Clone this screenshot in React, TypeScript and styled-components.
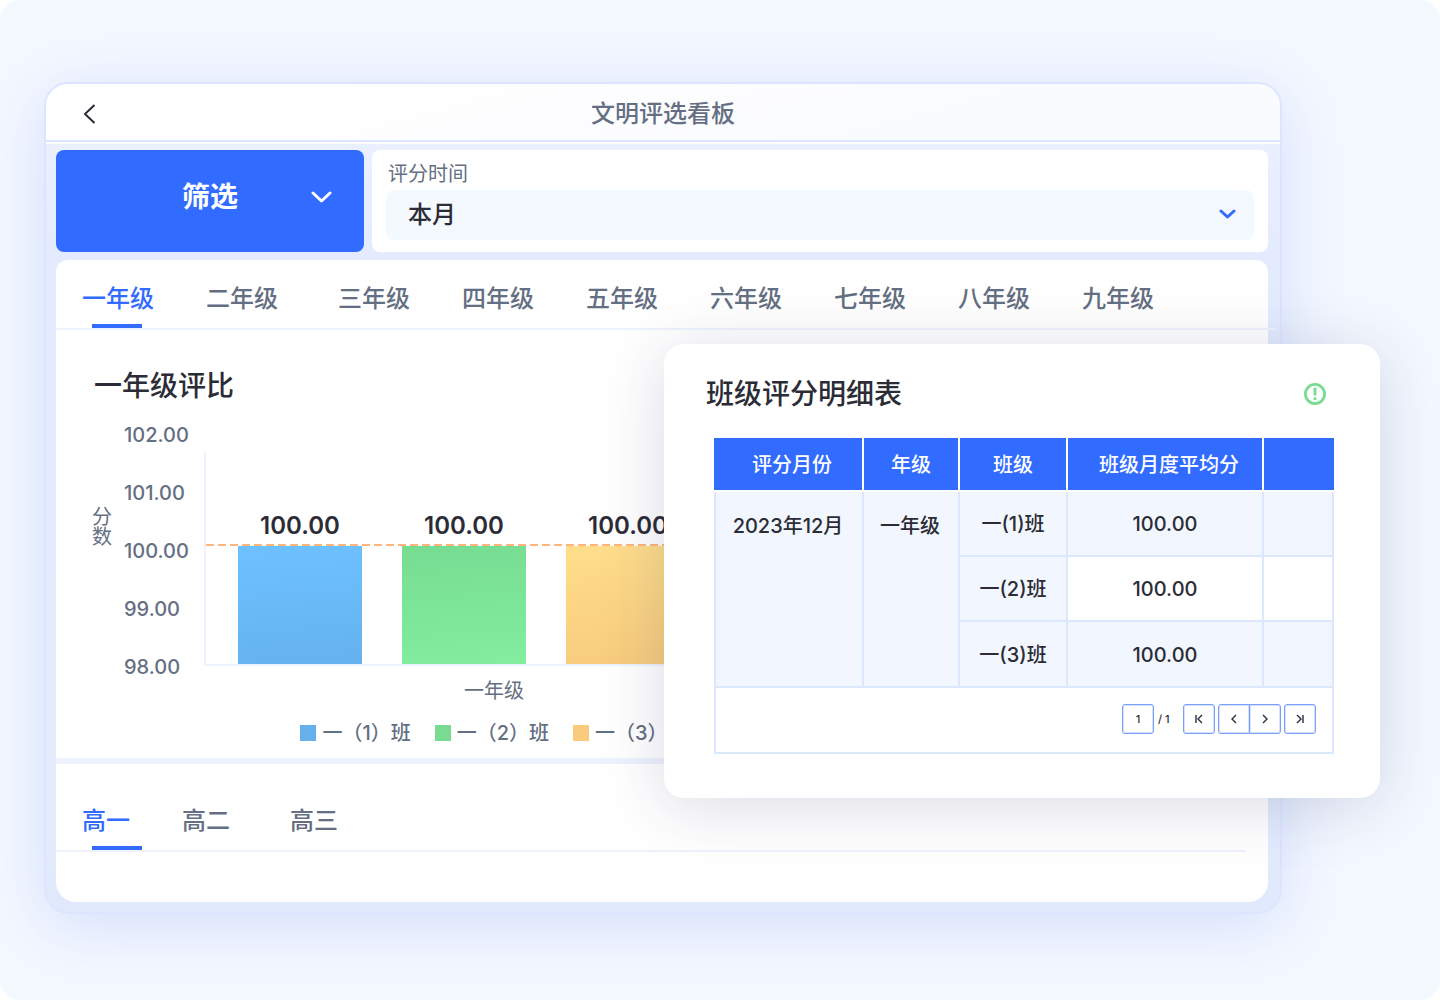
import React, { useState } from "react";
import styled, { createGlobalStyle, css } from "styled-components";

const colors = {
  primary: "#316bff",
  ink: "#2b2c36",
  muted: "#656f83",
  line: "#eef2fd",
  tableLine: "#dbe7fb",
  cell: "#f2f7ff",
};

const GlobalStyle = createGlobalStyle`
  * { box-sizing: border-box; }
  body {
    margin: 0;
    background: #fff;
    color: ${colors.ink};
    font-family: Inter, "Noto Sans CJK SC", sans-serif;
    font-weight: 500;
  }
  button, input, select { font: inherit; color: inherit; }
  button { border: 0; padding: 0; background: none; cursor: pointer; }
  h1, h2 { margin: 0; font-weight: 500; }
`;

const Page = styled.div`
  position: relative;
  min-height: 100vh;
  padding: 82px 158px 86px 44px;
  border-radius: 20px;
  background: #f4f8ff;
  overflow: hidden;
`;

const Device = styled.main`
  display: flex;
  flex-direction: column;
  border: 2px solid #dbe5ff;
  border-radius: 24px;
  background: linear-gradient(180deg, #ebf0ff 60px, #e4ebfe 170px, #e4ebfd 90%, #dfe9fb);
  box-shadow: 0 12px 64px rgba(62, 98, 232, 0.17);
  overflow: hidden;
`;

const TopBar = styled.header`
  display: grid;
  grid-template-columns: 48px 1fr 48px;
  align-items: center;
  height: 60px;
  padding: 2px 20px 0;
  border-bottom: 2px solid #fdfdff;
  background: linear-gradient(165deg, #fff 20%, #fafbff 70%);
  box-shadow: inset 0 -2px 0 #dbe5ff;
`;

const BackButton = styled.button`
  display: flex;
  justify-content: center;
`;

const PageTitle = styled.h1`
  color: ${colors.muted};
  font-size: 24px;
  line-height: 32px;
  text-align: center;
`;

const Content = styled.div`
  display: flex;
  flex-direction: column;
  gap: 8px;
  padding: 6px 12px 10px 10px;
`;

const FilterRow = styled.div`
  display: flex;
  gap: 8px;
`;

const FilterButton = styled.button`
  display: grid;
  grid-template-columns: 1fr auto 1fr;
  align-items: center;
  width: 308px;
  height: 102px;
  padding: 0 32px 8px;
  border-radius: 8px;
  background: ${colors.primary};
  color: #fff;
  font-size: 28px;
  line-height: 40px;
  font-weight: 600;
  svg { justify-self: end; }
`;

const FilterCard = styled.div`
  flex: 1;
  padding: 8px 14px 12px;
  border-radius: 8px;
  background: #fff;
`;

const FilterLabel = styled.label`
  display: block;
  padding: 0 2px;
  color: ${colors.muted};
  font-size: 20px;
  line-height: 32px;
  font-weight: 400;
`;

const SelectBox = styled.div`
  display: grid;
  align-items: center;
  border-radius: 8px;
  background: #f4f8ff;
  & > * { grid-area: 1 / 1; }
  svg { justify-self: end; margin: 0 18px 2px; pointer-events: none; }
`;

const Select = styled.select`
  width: 100%;
  height: 50px;
  padding: 0 22px 2px;
  border: 0;
  background: transparent;
  appearance: none;
  font-size: 24px;
`;

const Card = styled.section`
  border-radius: 12px 12px 20px 20px;
  background: #fff;
`;

const Tabs = styled.div<{ $columns: string; $tall?: boolean; $end: number }>`
  display: grid;
  grid-template-columns: ${(p) => p.$columns};
  height: ${(p) => (p.$tall ? 88 : 70)}px;
  align-items: end;
  padding-left: 26px;
  margin-right: ${(p) => p.$end}px;
  border-bottom: 2px solid ${colors.line};
`;

const Tab = styled.button<{ $active: boolean }>`
  display: flex;
  flex-direction: column;
  gap: 9px;
  color: ${(p) => (p.$active ? colors.primary : colors.muted)};
  font-size: 24px;
  line-height: 32px;
  text-align: left;
  white-space: nowrap;
  &::after {
    content: "";
    width: 50px;
    height: 4px;
    margin-left: 10px;
    background: ${(p) => (p.$active ? colors.primary : "transparent")};
  }
`;

const ChartSection = styled.div`
  padding: 36px 38px 10px;
  border-bottom: 6px solid ${colors.line};
`;

const SectionTitle = styled.h2`
  font-size: 28px;
  line-height: 40px;
`;

const Chart = styled.div`
  display: grid;
  grid-template-columns: 30px 80px 580px;
  margin-top: 14px;
`;

const AxisName = styled.div`
  width: 20px;
  margin: 87px 0 0 -2px;
  color: ${colors.muted};
  font-size: 20px;
  line-height: 20px;
  font-weight: 400;
`;

const Ticks = styled.ol`
  margin: 0;
  padding: 0;
  list-style: none;
  color: ${colors.muted};
  font-size: 20px;
  line-height: 30px;
  li { height: 58px; }
  li:last-child { height: 30px; }
`;

const ChartBody = styled.div`
  padding-top: 32px;
`;

const Plot = styled.div`
  position: relative;
  display: flex;
  align-items: end;
  gap: 40px;
  height: 214px;
  padding-left: 32px;
  border: solid ${colors.line};
  border-width: 0 0 2px 2px;
`;

const Average = styled.div`
  position: absolute;
  left: 0;
  right: 0;
  bottom: 118px;
  height: 2px;
  background: repeating-linear-gradient(90deg, #ffb47e 0 8px, transparent 8px 12px);
`;

const BarColumn = styled.div`
  width: 124px;
  font-size: 24px;
  line-height: 40px;
  font-weight: 600;
  text-align: center;
`;

const Bar = styled.div<{ $from: string; $to: string }>`
  background: linear-gradient(175deg, ${(p) => p.$from}, ${(p) => p.$to});
`;

const ChartCaption = styled.div`
  padding-top: 10px;
  color: ${colors.muted};
  font-size: 20px;
  line-height: 30px;
  font-weight: 400;
  text-align: center;
`;

const Legend = styled.ul`
  display: flex;
  justify-content: center;
  gap: 24px;
  margin: 12px 0 0;
  padding: 0;
  list-style: none;
  color: ${colors.muted};
  font-size: 20px;
  line-height: 30px;
`;

const LegendItem = styled.li<{ $color: string }>`
  display: flex;
  align-items: center;
  gap: 6px;
  white-space: nowrap;
  &::before {
    content: "";
    width: 16px;
    height: 16px;
    background: ${(p) => p.$color};
  }
`;

const Empty = styled.div`
  height: 50px;
`;

const Panel = styled.aside`
  position: absolute;
  top: 344px;
  right: 60px;
  width: 716px;
  padding: 30px 46px 44px 50px;
  border-radius: 20px;
  background: #fff;
  box-shadow: 0 8px 64px rgba(37, 43, 92, 0.17);
`;

const PanelHead = styled.div`
  display: flex;
  align-items: center;
  justify-content: space-between;
  margin: 0 8px 24px -8px;
`;

const Table = styled.table`
  width: 100%;
  table-layout: fixed;
  border-spacing: 0;
  border-collapse: separate;
  font-size: 20px;
  line-height: 30px;
`;

const HeadCell = styled.th<{ $indent?: boolean }>`
  height: 54px;
  padding: 2px 0 0 ${(p) => (p.$indent ? 8 : 0)}px;
  border-right: 2px solid #fff;
  border-bottom: 2px solid #fff;
  background: ${colors.primary};
  background-clip: padding-box;
  color: #fff;
  font-weight: 500;
  &:last-child { border-right: 0; }
`;

const Cell = styled.td<{ $white?: boolean; $top?: boolean }>`
  height: 65px;
  padding: ${(p) => (p.$top ? "19px 2px 0 0" : "0")};
  border-right: 2px solid ${colors.tableLine};
  border-bottom: 2px solid ${colors.tableLine};
  background: ${(p) => (p.$white ? "#fff" : colors.cell)};
  text-align: center;
  vertical-align: ${(p) => (p.$top ? "top" : "middle")};
  tr:last-child > & { height: 66px; padding-top: 2px; }
  ${(p) => p.$top && css`&:first-child { border-left: 2px solid ${colors.tableLine}; }`}
`;

const Pager = styled.nav`
  display: flex;
  align-items: center;
  justify-content: flex-end;
  height: 66px;
  padding: 0 16px 2px;
  border: solid ${colors.tableLine};
  border-width: 0 2px 2px;
  color: #272e40;
  font-size: 11px;
`;

const pagerBox = css`
  height: 30px;
  border: 1px solid #78a0fb;
  box-shadow: inset 0 0 0 1px #d5e1fe;
  background: #fff;
`;

const PageInput = styled.input`
  ${pagerBox}
  width: 32px;
  padding: 0;
  border-radius: 3px;
  text-align: center;
`;

const PageCount = styled.span`
  width: 29px;
  padding-left: 4px;
`;

const PagerGroup = styled.div`
  display: flex;
  margin: 0 3px;
`;

const PagerButton = styled.button<{ $join?: "left" | "right" }>`
  ${pagerBox}
  display: grid;
  place-items: center;
  width: 32px;
  border-radius: ${(p) =>
    p.$join === "left" ? "3px 0 0 3px" : p.$join === "right" ? "0 3px 3px 0" : "3px"};
  margin-left: ${(p) => (p.$join === "right" ? -1 : 0)}px;
`;

type StrokeProps = { d: string; w: number; h: number; color: string; stroke: number; round?: boolean };

const Stroke = ({ d, w, h, color, stroke, round }: StrokeProps) => (
  <svg width={w} height={h} viewBox={`0 0 ${w} ${h}`} fill="none" aria-hidden="true">
    <path
      d={d}
      stroke={color}
      strokeWidth={stroke}
      strokeLinecap={round ? "round" : "butt"}
      strokeLinejoin={round ? "round" : "miter"}
    />
  </svg>
);

const grades = ["一年级", "二年级", "三年级", "四年级", "五年级", "六年级", "七年级", "八年级", "九年级"];
const seniorGrades = ["高一", "高二", "高三"];
const ticks = ["102.00", "101.00", "100.00", "99.00", "98.00"];
const series = [
  { name: "一（1）班", value: "100.00", height: 118, from: "#6ec1ff", to: "#64b2ef", key: "#64b1ed" },
  { name: "一（2）班", value: "100.00", height: 118, from: "#77dc92", to: "#82ee9e", key: "#78db91" },
  { name: "一（3）班", value: "100.00", height: 118, from: "#ffde8b", to: "#f7cb7d", key: "#f9cb7e" },
];
const rows = [
  { name: "一(1)班", score: "100.00" },
  { name: "一(2)班", score: "100.00" },
  { name: "一(3)班", score: "100.00" },
];

export default function App() {
  const [grade, setGrade] = useState(0);
  const [senior, setSenior] = useState(0);

  return (
    <>
      <GlobalStyle />
      <Page>
        <Device>
          <TopBar>
            <BackButton aria-label="返回">
              <Stroke d="M11.5 1 2 10l9.500 9" w={14} h={20} color="#2b2c36" stroke={2} />
            </BackButton>
            <PageTitle>文明评选看板</PageTitle>
          </TopBar>
          <Content>
            <FilterRow>
              <FilterButton>
                <span />
                <span>筛选</span>
                <Stroke d="m2 2 8.500 8L19 2" w={21} h={12} color="#fff" stroke={3} round />
              </FilterButton>
              <FilterCard>
                <FilterLabel htmlFor="period">评分时间</FilterLabel>
                <SelectBox>
                  <Select id="period" defaultValue="month">
                    <option value="month">本月</option>
                  </Select>
                  <Stroke d="m2 2 6.500 6L15 2" w={17} h={11} color={colors.primary} stroke={3} round />
                </SelectBox>
              </FilterCard>
            </FilterRow>
            <Card>
              <Tabs role="tablist" $columns="124px 132px repeat(7, 124px)" $end={-8}>
                {grades.map((name, i) => (
                  <Tab key={name} role="tab" aria-selected={i === grade} $active={i === grade} onClick={() => setGrade(i)}>
                    {name}
                  </Tab>
                ))}
              </Tabs>
              <ChartSection>
                <SectionTitle>一年级评比</SectionTitle>
                <Chart>
                  <AxisName>分数</AxisName>
                  <Ticks>
                    {ticks.map((t) => (
                      <li key={t}>{t}</li>
                    ))}
                  </Ticks>
                  <ChartBody>
                    <Plot>
                      {series.map((s) => (
                        <BarColumn key={s.name}>
                          {s.value}
                          <Bar $from={s.from} $to={s.to} style={{ height: s.height }} />
                        </BarColumn>
                      ))}
                      <Average />
                    </Plot>
                    <ChartCaption>一年级</ChartCaption>
                    <Legend>
                      {series.map((s) => (
                        <LegendItem key={s.name} $color={s.key}>
                          {s.name}
                        </LegendItem>
                      ))}
                    </Legend>
                  </ChartBody>
                </Chart>
              </ChartSection>
              <Tabs role="tablist" $columns="100px 108px 108px" $tall $end={22}>
                {seniorGrades.map((name, i) => (
                  <Tab key={name} role="tab" aria-selected={i === senior} $active={i === senior} onClick={() => setSenior(i)}>
                    {name}
                  </Tab>
                ))}
              </Tabs>
              <Empty />
            </Card>
          </Content>
        </Device>

        <Panel>
          <PanelHead>
            <SectionTitle>班级评分明细表</SectionTitle>
            <svg width="22" height="22" viewBox="0 0 22 22" fill="none" aria-hidden="true">
              <circle cx="11" cy="11" r="9.600" stroke="#78db91" strokeWidth="2.800" />
              <path d="M11 4.800v7.700M11 14.200v2.800" stroke="#78db91" strokeWidth="2.800" />
            </svg>
          </PanelHead>
          <Table>
            <colgroup>
              <col width="150" />
              <col width="96" />
              <col width="108" />
              <col width="196" />
              <col width="70" />
            </colgroup>
            <thead>
              <tr>
                <HeadCell $indent>评分月份</HeadCell>
                <HeadCell>年级</HeadCell>
                <HeadCell>班级</HeadCell>
                <HeadCell $indent>班级月度平均分</HeadCell>
                <HeadCell />
              </tr>
            </thead>
            <tbody>
              {rows.map((r, i) => (
                <tr key={r.name}>
                  {i === 0 && (
                    <>
                      <Cell rowSpan={3} $top>2023年12月</Cell>
                      <Cell rowSpan={3} $top>一年级</Cell>
                    </>
                  )}
                  <Cell>{r.name}</Cell>
                  <Cell $white={i === 1}>{r.score}</Cell>
                  <Cell $white={i === 1} />
                </tr>
              ))}
            </tbody>
          </Table>
          <Pager aria-label="分页">
            <PageInput aria-label="页码" defaultValue="1" />
            <PageCount>/ 1</PageCount>
            <PagerButton aria-label="首页">
              <Stroke d="M1 1v8M7 1 3 5l4 4" w={8} h={10} color="#272e40" stroke={1.4} />
            </PagerButton>
            <PagerGroup>
              <PagerButton aria-label="上一页" $join="left">
                <Stroke d="M6 1 2 5l4 4" w={8} h={10} color="#272e40" stroke={1.4} />
              </PagerButton>
              <PagerButton aria-label="下一页" $join="right">
                <Stroke d="m2 1 4 4-4 4" w={8} h={10} color="#272e40" stroke={1.4} />
              </PagerButton>
            </PagerGroup>
            <PagerButton aria-label="末页">
              <Stroke d="M7 1v8M1 1l4 4-4 4" w={8} h={10} color="#272e40" stroke={1.4} />
            </PagerButton>
          </Pager>
        </Panel>
      </Page>
    </>
  );
}
